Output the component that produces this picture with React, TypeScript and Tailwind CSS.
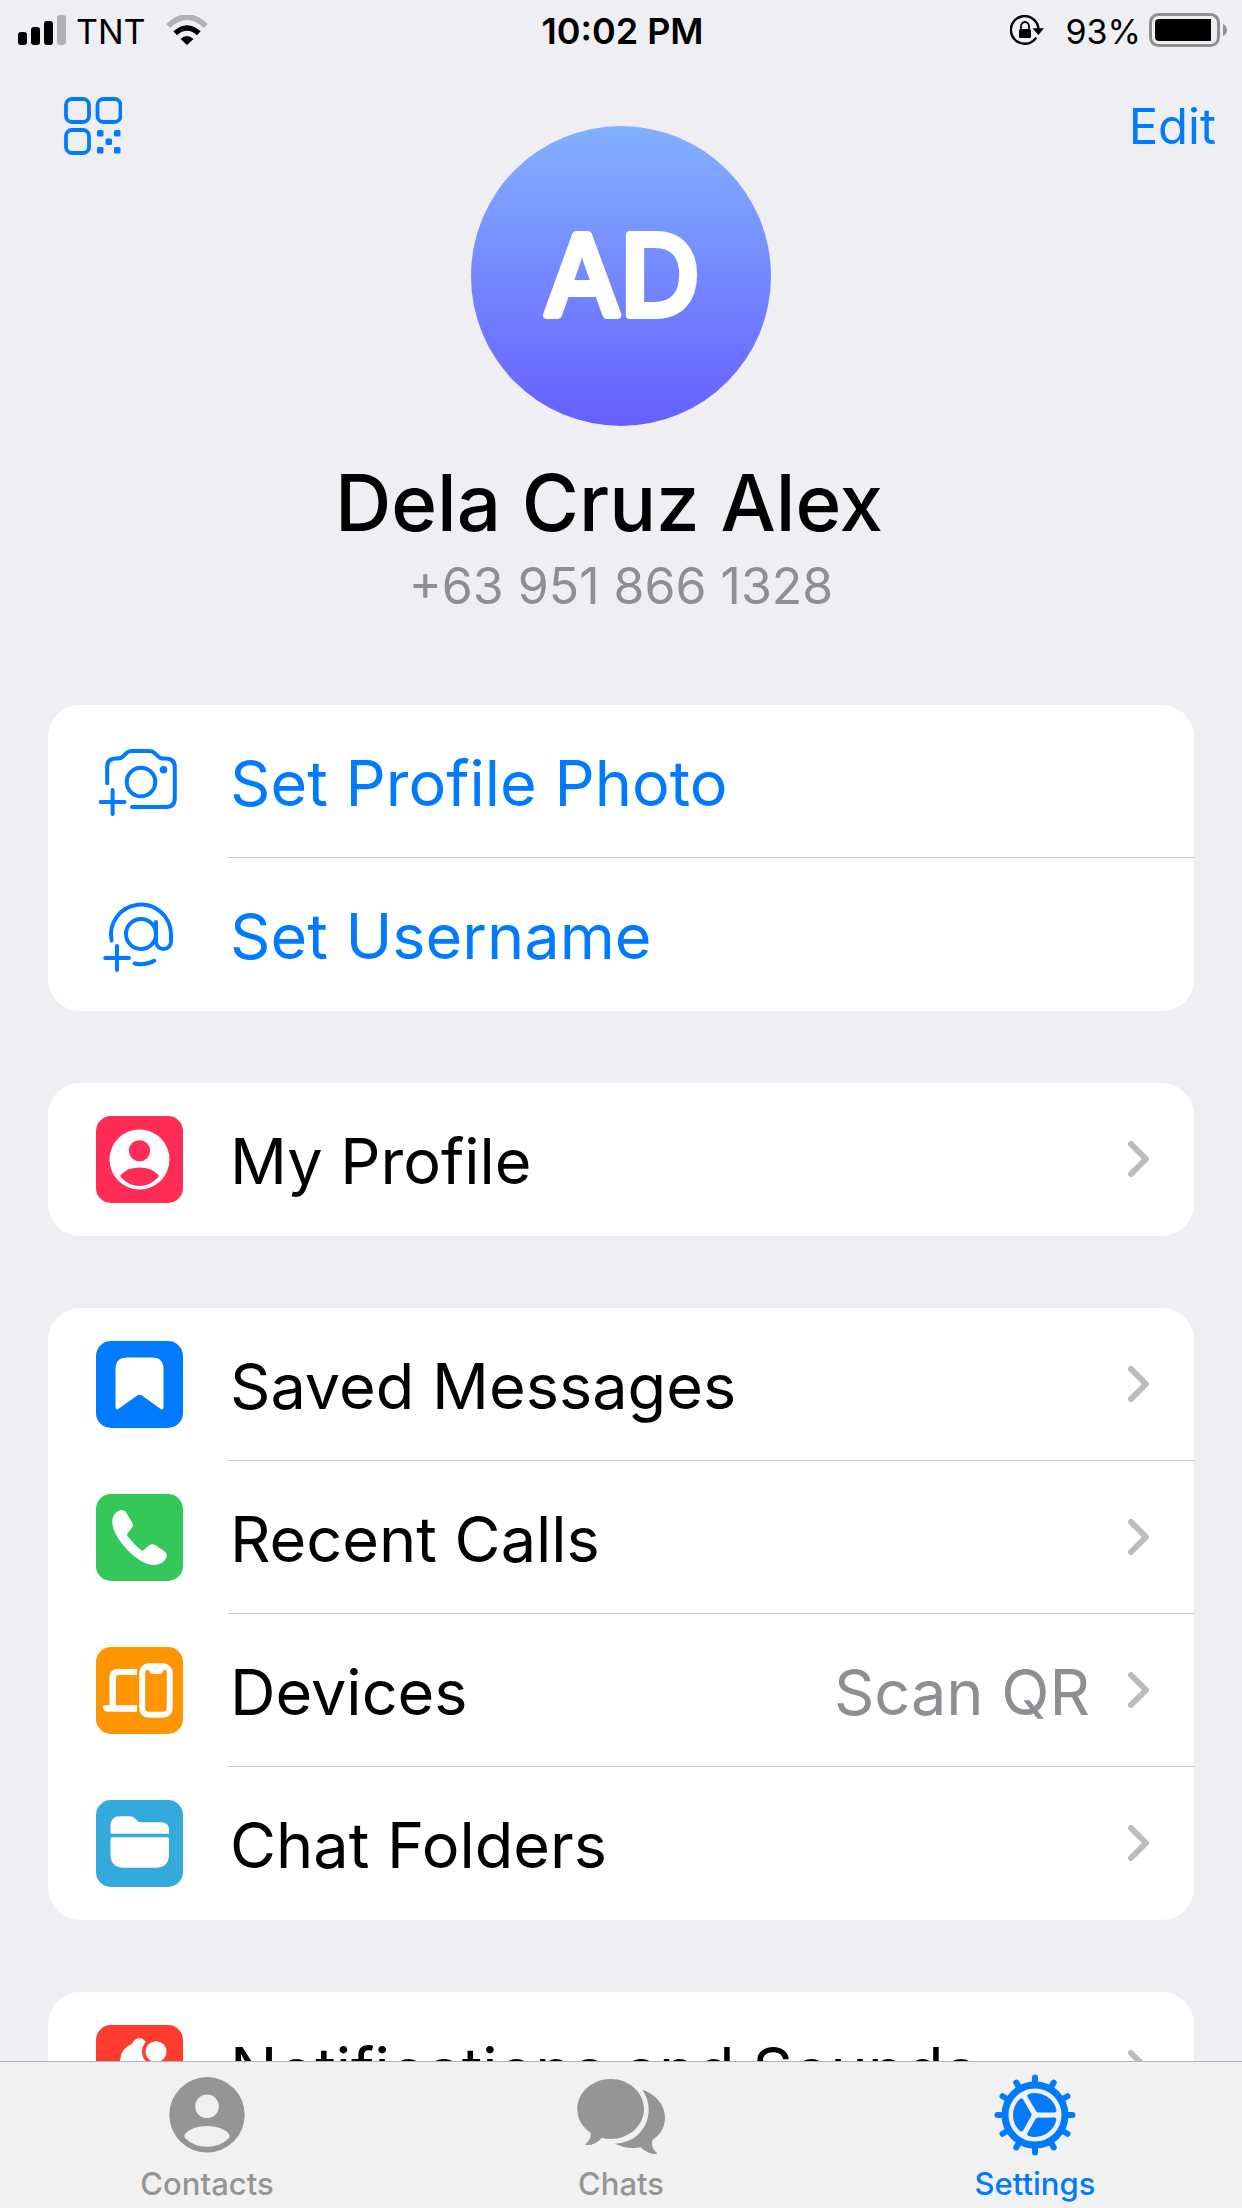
import type { ReactNode } from "react";

const TEETH = [0, 30, 60, 90, 120, 150, 180, 210, 240, 270, 300, 330];

function SignalIcon() {
  return (
    <svg className="h-[30px] w-12" viewBox="0 0 48 30" aria-hidden="true">
      <rect x="0" y="17" width="9" height="13" rx="3" />
      <rect x="13" y="12" width="9" height="18" rx="3" />
      <rect x="26" y="6" width="9" height="24" rx="3" />
      <rect x="39" y="0" width="9" height="30" rx="3" fill="#b2b1b6" />
    </svg>
  );
}

function WifiIcon() {
  return (
    <svg className="h-[30px] w-[42px]" viewBox="0 0 42 30" aria-hidden="true">
      <path d="M2.2 11Q21-7 39.800 11" fill="none" stroke="#b2b1b6" strokeWidth="5.500" />
      <path d="M9.200 18.200Q21 7.800 32.800 18.200" fill="none" stroke="#000" strokeWidth="5.500" />
      <path d="M14.500 24Q21 18 27.500 24L21 30Z" />
    </svg>
  );
}

function RotationLockIcon() {
  return (
    <svg className="h-[30px] w-[34px]" viewBox="0 0 34 30" aria-hidden="true">
      <path d="M28.500 14.500A13.800 13.800 0 1 0 26.200 22.600" fill="none" stroke="#000" strokeWidth="2.400" />
      <path d="M22.500 13.200H34L28.400 20Z" />
      <rect x="9" y="14" width="12" height="9" rx="1.500" />
      <path d="M11 14.500V11.500a4 4.500 0 0 1 8 0V14.500" fill="none" stroke="#000" strokeWidth="1.800" />
    </svg>
  );
}

function BatteryIcon() {
  return (
    <svg className="h-[34px] w-[78px]" viewBox="0 0 78 34" aria-hidden="true">
      <rect x="1.500" y="1.500" width="68" height="31" rx="8" fill="none" stroke="#8f8f92" strokeWidth="3" />
      <path d="M6 10a4 4 0 0 1 4-4H62V28H10a4 4 0 0 1-4-4Z" />
      <path d="M74 11q4 2 4 6t-4 6Z" fill="#8f8f92" />
    </svg>
  );
}

function QrIcon() {
  return (
    <svg className="h-[58px] w-[58px]" viewBox="0 0 58 58" aria-hidden="true">
      <g fill="none" stroke="currentColor" strokeWidth="3.800">
        <rect x="2" y="2" width="23" height="23" rx="6" />
        <rect x="33.500" y="2" width="23" height="23" rx="6" />
        <rect x="2" y="33" width="23" height="23" rx="6" />
      </g>
      <g fill="currentColor">
        <rect x="33" y="33" width="6.500" height="6.500" rx="1.500" />
        <rect x="50" y="33" width="6.500" height="6.500" rx="1.500" />
        <rect x="41.500" y="41.500" width="6.500" height="6.500" rx="1.500" />
        <rect x="33" y="50" width="6.500" height="6.500" rx="1.500" />
        <rect x="50" y="50" width="6.500" height="6.500" rx="1.500" />
      </g>
    </svg>
  );
}

function IconBox({ className, children }: { className?: string; children: ReactNode }) {
  return (
    <svg
      className={`h-[87px] w-[87px] shrink-0 rounded-[15px] ${className ?? ""}`}
      viewBox="0 0 87 87"
      fill="#fff"
      aria-hidden="true"
    >
      {children}
    </svg>
  );
}

function CameraIcon() {
  return (
    <IconBox>
      <g fill="none" stroke="#007aff" strokeWidth="4" strokeLinecap="round" strokeLinejoin="round">
        <path d="M11.200 45.300V29Q11.200 20.500 19.500 20.500H22Q25 20.500 27 18.500L30.500 15Q32.500 13 35.500 13H53.500Q56.500 13 58.500 15L62.500 18.800Q64.500 20.500 67 20.500H70Q78.800 20.500 78.800 29.500V60Q78.800 69 70 69H36" />
        <circle cx="45" cy="44" r="14.300" />
        <path d="M4.700 64H28.500M16.600 52V76" />
      </g>
      <circle cx="67.500" cy="31.800" r="3.800" fill="#007aff" />
    </IconBox>
  );
}

function UsernameIcon() {
  return (
    <IconBox>
      <g fill="none" stroke="#007aff" strokeWidth="4" strokeLinecap="round" strokeLinejoin="round">
        <path d="M15.600 49.500A30 30 0 1 1 75 43V50.500A7.500 7.500 0 0 1 60 50.500V31" />
        <circle cx="45" cy="43" r="15" />
        <path d="M9.200 67H33M21 55V79" />
        <path d="M38.600 72.500Q49 75 58.300 69.800" />
      </g>
    </IconBox>
  );
}

function ProfileIcon() {
  return (
    <IconBox className="bg-[#ff2d55]">
      <circle cx="43.500" cy="43.500" r="30" />
      <circle cx="43.500" cy="34.800" r="10.600" fill="#ff2d55" />
      <path d="M25 61.500Q23.600 60 25 58.500Q32 51.500 43.500 51.500T62 58.500Q63.400 60 62 61.500Q54 70 43.500 70T25 61.500Z" fill="#ff2d55" />
    </IconBox>
  );
}

function BookmarkIcon() {
  return (
    <IconBox className="bg-[#007aff]">
      <path d="M19.500 28Q19.500 16.500 31 16.500H56Q67.500 16.500 67.500 28V65.500Q67.500 70 64 67.500L45.500 54.300Q43.500 53 41.500 54.300L23 67.500Q19.500 70 19.500 65.500Z" />
    </IconBox>
  );
}

function PhoneIcon() {
  return (
    <IconBox className="bg-[#34c759]">
      <path d="M25.500 16C20 16.500 16 22 16.300 29C16.800 38 25 50 34 58.500C42 66 51 71.200 58 71C65 70.800 70.500 66.500 70.800 61.500C70.900 59.500 69.500 58 67 56.300L59.500 51.200C57 49.700 55 50 53 51.600L47.800 55.900C46.500 57 45.500 56.600 44 55.300C39.500 51.300 35 46.500 31.700 42.500C30.800 41.300 30.800 40.300 31.600 39.300L35.800 33.800C37.200 32 37.200 30.200 35.800 28L30.300 18.800C29.200 16.900 27.800 15.900 25.500 16Z" />
    </IconBox>
  );
}

function DevicesIcon() {
  return (
    <IconBox className="bg-[#ff9500]">
      <path d="M41 22H22Q13.500 22 13.500 30.500V58.300H9Q7 58.300 7 60Q7 64.700 12 64.700H41V58.300H20V30.500Q20 28 22.500 28H41Z" />
      <rect x="46.200" y="19.200" width="27.500" height="48.500" rx="6.500" fill="none" stroke="#fff" strokeWidth="6" />
      <path d="M50 21H70V22Q67.500 22.500 67 24.500Q66.500 27 63.500 27H57Q54 27 53.500 24.500Q53 22.500 50 22Z" />
    </IconBox>
  );
}

function FolderIcon() {
  return (
    <IconBox className="bg-[#34aadc]">
      <path d="M14.500 33.700V26Q14.500 16.300 24 16.300H34Q37 16.300 39 18.500L41.500 21Q43 22.200 45.500 22.200H65Q73 22.200 73 30V33.700Z" />
      <path d="M16 37.300H71.500Q73 37.300 73 39V54Q73 67.700 60 67.700H27.500Q14.500 67.700 14.500 54V39Q14.500 37.300 16 37.300Z" />
    </IconBox>
  );
}

function BellIcon() {
  return (
    <IconBox className="bg-[#ff3b30]">
      <path d="M36 19Q38.500 13.300 43.500 13.300Q48 13.300 50.500 18Q62 22 62 38V48L68 58V62H19V58L24 48V38Q24 23 36 19Z" />
      <circle cx="60" cy="26.700" r="14" fill="#ff3b30" />
      <circle cx="60" cy="26.700" r="10.500" />
    </IconBox>
  );
}

function Chevron() {
  return (
    <svg className="h-9 w-[21px] shrink-0" viewBox="0 0 21 36" aria-hidden="true">
      <path
        d="M3 3L18 18L3 33"
        fill="none"
        stroke="#bbbbc0"
        strokeWidth="6"
        strokeLinecap="round"
        strokeLinejoin="round"
      />
    </svg>
  );
}

function ContactsTabIcon() {
  return (
    <svg className="h-[90px] w-[90px]" viewBox="0 0 90 90" aria-hidden="true">
      <circle cx="45" cy="44.800" r="37.700" fill="#959595" />
      <circle cx="45" cy="36.400" r="11.800" fill="#f1f0f0" />
      <path d="M23 68Q21.500 66 23 64Q30 56 45 56T67 64Q68.500 66 67 68Q58 76.800 45 76.800T23 68Z" fill="#f1f0f0" />
    </svg>
  );
}

function ChatsTabIcon() {
  return (
    <svg className="h-[90px] w-[90px]" viewBox="0 0 90 90" fill="#959595" aria-hidden="true">
      <path d="M34.700 9C53 9 68 22.500 68 39S53 69 34.700 69Q30 69 25.700 67.900Q18 76 10 75Q8.500 74.500 10 73.500Q16.500 68 14.300 62.500C6 57 1.300 48.500 1.300 39C1.300 22.500 16.300 9 34.700 9Z" />
      <path d="M66.300 19.700C80 24 89 35 89 48C89 57 84.500 64.500 76.500 70Q74 77 80.500 82.500Q81.500 84 80 84Q71.500 84 64.800 77.200C56 79 47 77.700 39 73.700C59 73 72.700 58 72.700 39.300Q72.700 29 66.300 19.700Z" />
    </svg>
  );
}

function SettingsTabIcon() {
  return (
    <svg className="h-[90px] w-[90px]" viewBox="0 0 90 90" aria-hidden="true">
      <g stroke="#007aff" strokeWidth="6" strokeLinecap="round">
        {TEETH.map((deg) => (
          <path key={deg} d="M45 15V7.500" transform={`rotate(${deg} 45 45)`} />
        ))}
      </g>
      <circle cx="45" cy="45" r="30" fill="none" stroke="#007aff" strokeWidth="7" />
      <g fill="#007aff" stroke="#007aff" strokeWidth="4" strokeLinejoin="round">
        {[0, 120, 240].map((deg) => (
          <path key={deg} d="M48 40.500L39.300 25.900A20 20 0 0 1 64.500 40.500Z" transform={`rotate(${deg} 45 45)`} />
        ))}
      </g>
    </svg>
  );
}

type RowProps = { icon: ReactNode; label: string; value?: string; action?: boolean };

function Row({ icon, label, value, action }: RowProps) {
  return (
    <li className="group">
      <button type="button" className="flex h-[153px] w-full items-center pl-12 text-left">
        {icon}
        <span
          className={`ml-[45px] flex h-full min-w-0 flex-1 items-center border-b border-[#c8c7cc] pr-[45px] group-last:border-transparent ${
            action ? "text-[#007aff]" : "text-black"
          }`}
        >
          <span className="flex-1 pt-1 pl-0.5 leading-[84px] whitespace-nowrap">{label}</span>
          {value && <span className="mr-[38px] pt-1 leading-[84px] text-[#8e8e93]">{value}</span>}
          {!action && <Chevron />}
        </span>
      </button>
    </li>
  );
}

function Card({ children }: { children: ReactNode }) {
  return <ul className="overflow-hidden rounded-[32px] bg-white text-[63px]">{children}</ul>;
}

function Tab({ icon, label, active }: { icon: ReactNode; label: string; active?: boolean }) {
  return (
    <button
      type="button"
      className={`flex flex-1 flex-col items-center pt-2 text-[31px] leading-9 font-medium ${
        active ? "text-[#007aff]" : "text-[#959595]"
      }`}
    >
      {icon}
      <span className="mt-1.5">{label}</span>
    </button>
  );
}

export default function App() {
  return (
    <div className="flex h-screen flex-col overflow-hidden bg-[#efeef3] font-['Inter',sans-serif] text-black">
      <div className="grid h-[60px] shrink-0 grid-cols-3 items-center pr-[15px] pl-[18px] text-[34px]">
        <div className="flex items-center">
          <SignalIcon />
          <span className="mr-5 ml-2.5 pt-0.5">TNT</span>
          <WifiIcon />
        </div>
        <span className="pt-0.5 text-center text-[36px] font-semibold">10:02 PM</span>
        <div className="flex items-center justify-end">
          <RotationLockIcon />
          <span className="mr-2 ml-[22px] pt-0.5">93%</span>
          <BatteryIcon />
        </div>
      </div>

      <main className="min-h-0 flex-1 overflow-hidden">
        <header className="grid grid-cols-[1fr_auto_1fr] items-start">
          <button type="button" aria-label="QR code" className="mt-[37px] ml-16 justify-self-start text-[#007aff]">
            <QrIcon />
          </button>
          <svg className="mt-[66px] h-[300px] w-[300px]" viewBox="0 0 300 300">
            <defs>
              <linearGradient id="avatar" x1="0" y1="0" x2="0" y2="1">
                <stop offset="0" stopColor="#82b1ff" />
                <stop offset="1" stopColor="#665fff" />
              </linearGradient>
            </defs>
            <circle cx="150" cy="150" r="150" fill="url(#avatar)" />
            <text
              x="151"
              y="189"
              textAnchor="middle"
              fontSize="110"
              fontWeight="400"
              fill="#fff"
              stroke="#fff"
              strokeWidth="8"
              strokeLinejoin="round"
            >
              AD
            </text>
          </svg>
          <button type="button" className="mt-[37px] mr-[26px] justify-self-end text-[49px] leading-[60px] text-[#007aff]">
            Edit
          </button>
        </header>

        <div className="mt-7 text-center">
          <h1 className="pr-6 text-[78px] leading-[98px] font-medium">Dela Cruz Alex</h1>
          <p className="mt-1 text-[50px] leading-[60px] text-[#8e8e93]">+63 951 866 1328</p>
        </div>

        <div className="mx-12 mt-[89px] flex flex-col gap-[72px]">
          <Card>
            <Row icon={<CameraIcon />} label="Set Profile Photo" action />
            <Row icon={<UsernameIcon />} label="Set Username" action />
          </Card>
          <Card>
            <Row icon={<ProfileIcon />} label="My Profile" />
          </Card>
          <Card>
            <Row icon={<BookmarkIcon />} label="Saved Messages" />
            <Row icon={<PhoneIcon />} label="Recent Calls" />
            <Row icon={<DevicesIcon />} label="Devices" value="Scan QR" />
            <Row icon={<FolderIcon />} label="Chat Folders" />
          </Card>
          <Card>
            <Row icon={<BellIcon />} label="Notifications and Sounds" />
          </Card>
        </div>
      </main>

      <nav className="flex h-[147px] shrink-0 border-t border-[#b2b2b2] bg-[#f1f1f1]">
        <Tab icon={<ContactsTabIcon />} label="Contacts" />
        <Tab icon={<ChatsTabIcon />} label="Chats" />
        <Tab icon={<SettingsTabIcon />} label="Settings" active />
      </nav>
    </div>
  );
}
